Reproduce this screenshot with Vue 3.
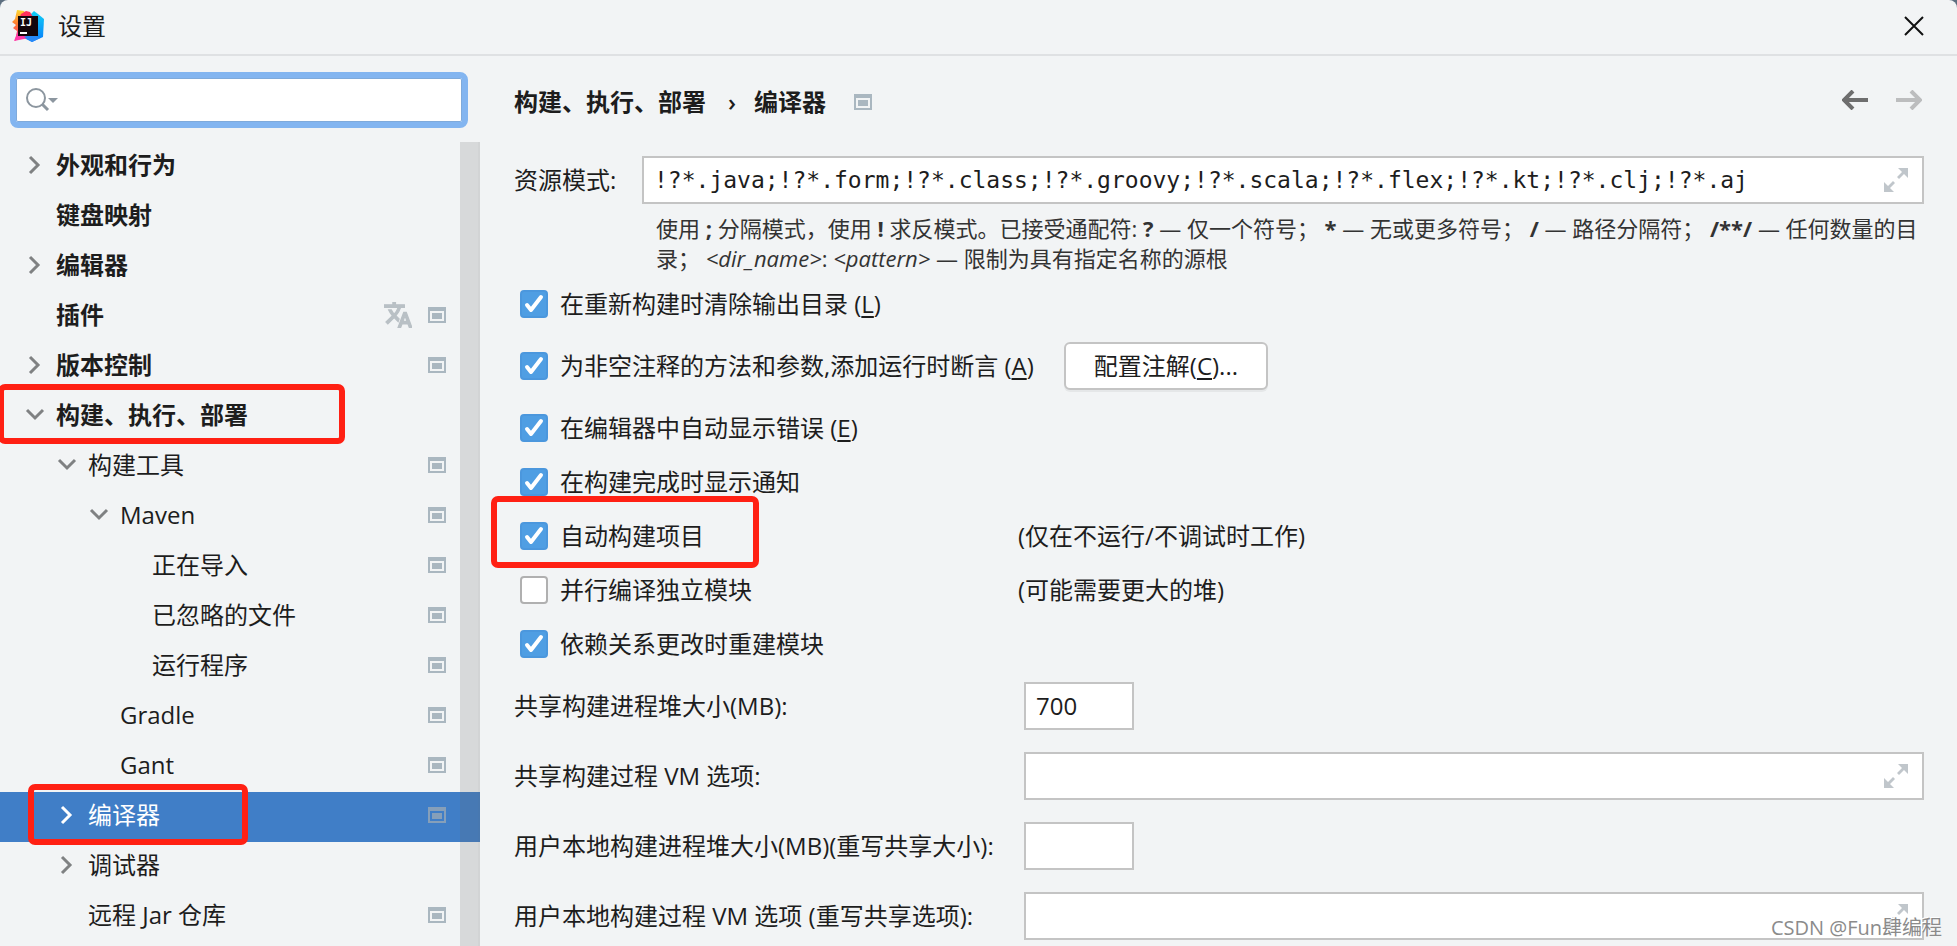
<template>
  <div class="dialog">
    <header class="titlebar">
      <svg class="logo" viewBox="0 0 32 32" aria-hidden="true">
        <defs>
          <linearGradient id="lg-warm" x1="0" y1="0" x2="0" y2="1">
            <stop offset="0" stop-color="#fdd835" />
            <stop offset="0.45" stop-color="#ff7a2f" />
            <stop offset="1" stop-color="#ff2d90" />
          </linearGradient>
          <linearGradient id="lg-cool" x1="0" y1="0" x2="0" y2="1">
            <stop offset="0" stop-color="#10d0f5" />
            <stop offset="1" stop-color="#087cfa" />
          </linearGradient>
        </defs>
        <path d="M18 5l4-4 4 3 6 5-1 18-11 5-8-4z" fill="url(#lg-cool)" />
        <path d="M5 0l7 1 4 6-7 20-6 4 2-10-4-3 3-3-4-3 3-3z" fill="url(#lg-warm)" />
        <path d="M9 4l5-3 4 1 3 5H8z" fill="#fe315d" />
        <path d="M2 31l4-10 12 7-6 1z" fill="#ff3aa8" />
        <path d="M12 27l8 5 8-4-8-4z" fill="#2789f8" />
        <rect x="6" y="6" width="20" height="20" fill="#12060b" />
        <text x="8" y="16" class="logo-text">IJ</text>
        <rect x="8" y="22" width="7" height="2" fill="#fff" />
      </svg>
      <h1>设置</h1>
      <button class="icon-btn close" type="button" aria-label="关闭">
        <svg width="20" height="20" viewBox="0 0 20 20">
          <path d="M1 1l18 18M19 1L1 19" stroke="#111" stroke-width="2" fill="none" />
        </svg>
      </button>
    </header>

    <div class="body">
      <aside class="sidebar">
        <label class="search">
          <svg width="34" height="26" viewBox="0 0 34 26" aria-hidden="true">
            <circle cx="12" cy="11" r="9" fill="none" stroke="#8c969f" stroke-width="2" />
            <path d="M18 17l6 6" stroke="#8c969f" stroke-width="3" />
            <path d="M24 11h10l-5 5z" fill="#8c969f" />
          </svg>
          <input v-model="query" type="text" aria-label="搜索设置" />
        </label>

        <div class="tree-wrap">
          <ul class="tree">
            <li v-for="item in tree" :key="item.label">
              <button
                type="button"
                class="node"
                :class="[`level-${item.level}`, { selected: item.label === current }]"
                @click="current = item.label"
              >
                <span class="arrow">
                  <svg v-if="item.state === 'closed'" width="12" height="18" viewBox="0 0 12 18">
                    <path d="M1 1l8 8-8 8" />
                  </svg>
                  <svg v-else-if="item.state === 'open'" width="18" height="12" viewBox="0 0 18 12">
                    <path d="M1 1l8 8 8-8" />
                  </svg>
                </span>
                <span class="name">{{ item.label }}</span>
                <svg v-if="item.translate" class="lang" width="28" height="26" viewBox="1 2 22 20">
                  <path
                    d="M12.87 15.07l-2.54-2.51.03-.03c1.74-1.94 2.98-4.17 3.71-6.53H17V4h-7V2H8v2H1v1.99h11.17C11.5 7.92 10.44 9.75 9 11.35 8.07 10.32 7.3 9.19 6.69 8h-2c.73 1.63 1.73 3.17 2.98 4.56l-5.09 5.02L4 19l5-5 3.11 3.11.76-2.04zM18.5 10h-2L12 22h2l1.12-3h4.75L21 22h2l-4.5-12zm-2.62 7l1.62-4.33L19.12 17h-3.24z"
                  />
                </svg>
                <svg v-if="item.project" class="project" width="18" height="16" viewBox="0 0 18 16">
                  <path fill-rule="evenodd" d="M0 0h18v16H0zM2 4v10h14V4zM4 6h10v6H4z" />
                </svg>
              </button>
              <span v-if="item.mark" class="mark" :class="item.mark" />
            </li>
          </ul>
          <div class="scrollbar" />
        </div>
      </aside>

      <main class="content">
        <div class="crumbs">
          <h2>构建、执行、部署</h2>
          <span class="sep">›</span>
          <h2>编译器</h2>
          <svg class="project" width="18" height="16" viewBox="0 0 18 16">
            <path fill-rule="evenodd" d="M0 0h18v16H0zM2 4v10h14V4zM4 6h10v6H4z" />
          </svg>
          <nav class="history">
            <button class="icon-btn" type="button" aria-label="后退">
              <svg width="26" height="20" viewBox="0 0 26 20">
                <path d="M26 10H3M11 1l-9 9 9 9" stroke="#6e6e6e" stroke-width="4" fill="none" />
              </svg>
            </button>
            <button class="icon-btn" type="button" aria-label="前进" disabled>
              <svg width="26" height="20" viewBox="0 0 26 20">
                <path d="M0 10h23M15 1l9 9-9 9" stroke="#bcbdbe" stroke-width="4" fill="none" />
              </svg>
            </button>
          </nav>
        </div>

        <div class="pattern-row">
          <label for="patterns">资源模式:</label>
          <div class="field">
            <input id="patterns" v-model="patterns" class="mono" type="text" />
            <button class="icon-btn" type="button" aria-label="展开">
              <svg width="24" height="24" viewBox="0 0 24 24">
                <path d="M14 0h10v10l-4-4-5 5-2-2 5-5zM0 24V14l4 4 5-5 2 2-5 5 4 4z" fill="#c0c6cb" />
              </svg>
            </button>
          </div>
        </div>
        <p class="hint">
          使用 <b>;</b> 分隔模式，使用 <b>!</b> 求反模式。已接受通配符: <b>?</b> — 仅一个符号； <b>*</b> —
          无或更多符号； <b>/</b> — 路径分隔符； <b>/**/</b> — 任何数量的目录； <i>&lt;dir_name&gt;</i>:
          <i>&lt;pattern&gt;</i> — 限制为具有指定名称的源根
        </p>

        <div class="options">
          <div v-for="opt in options" :key="opt.id" class="option" :class="{ tall: opt.tall }">
            <div class="option-main">
              <span class="check">
                <input :id="opt.id" v-model="opt.checked" type="checkbox" />
                <svg v-if="opt.checked" width="28" height="28" viewBox="0 0 28 28">
                  <path d="M7 15l4 5L21 7" />
                </svg>
              </span>
              <label :for="opt.id"
                >{{ opt.label }}<template v-if="opt.key"> (<u>{{ opt.key }}</u>)</template></label
              >
              <button v-if="opt.action" class="push" type="button">配置注解(<u>C</u>)...</button>
            </div>
            <span v-if="opt.note" class="note">{{ opt.note }}</span>
            <span v-if="opt.mark" class="mark auto" />
          </div>
        </div>

        <div class="form">
          <div v-for="f in fields" :key="f.id" class="form-row">
            <label :for="f.id">{{ f.label }}</label>
            <div class="field" :class="{ small: !f.wide }">
              <input :id="f.id" v-model="f.value" type="text" />
              <button v-if="f.wide" class="icon-btn" type="button" aria-label="展开">
                <svg width="24" height="24" viewBox="0 0 24 24">
                  <path d="M14 0h10v10l-4-4-5 5-2-2 5-5zM0 24V14l4 4 5-5 2 2-5 5 4 4z" fill="#c0c6cb" />
                </svg>
              </button>
            </div>
          </div>
        </div>
      </main>
    </div>

    <div class="watermark">CSDN @Fun肆编程</div>
  </div>
</template>

<script setup>
import { ref } from "vue";

const query = ref("");
const current = ref("编译器");
const patterns = ref(
  "!?*.java;!?*.form;!?*.class;!?*.groovy;!?*.scala;!?*.flex;!?*.kt;!?*.clj;!?*.aj"
);

const tree = [
  { label: "外观和行为", level: 0, state: "closed" },
  { label: "键盘映射", level: 0 },
  { label: "编辑器", level: 0, state: "closed" },
  { label: "插件", level: 0, project: true, translate: true },
  { label: "版本控制", level: 0, state: "closed", project: true },
  { label: "构建、执行、部署", level: 0, state: "open", mark: "build" },
  { label: "构建工具", level: 1, state: "open", project: true },
  { label: "Maven", level: 2, state: "open", project: true },
  { label: "正在导入", level: 3, project: true },
  { label: "已忽略的文件", level: 3, project: true },
  { label: "运行程序", level: 3, project: true },
  { label: "Gradle", level: 2, project: true },
  { label: "Gant", level: 2, project: true },
  { label: "编译器", level: 1, state: "closed", project: true, mark: "compiler" },
  { label: "调试器", level: 1, state: "closed" },
  { label: "远程 Jar 仓库", level: 1, project: true },
];

const options = ref([
  { id: "clear", label: "在重新构建时清除输出目录", key: "L", checked: true, tall: true },
  {
    id: "assert",
    label: "为非空注释的方法和参数,添加运行时断言",
    key: "A",
    checked: true,
    tall: true,
    action: true,
  },
  { id: "errors", label: "在编辑器中自动显示错误", key: "E", checked: true },
  { id: "notify", label: "在构建完成时显示通知", checked: true },
  { id: "auto", label: "自动构建项目", checked: true, note: "(仅在不运行/不调试时工作)", mark: true },
  { id: "parallel", label: "并行编译独立模块", checked: false, note: "(可能需要更大的堆)" },
  { id: "deps", label: "依赖关系更改时重建模块", checked: true },
]);

const fields = ref([
  { id: "heap", label: "共享构建进程堆大小(MB):", value: "700" },
  { id: "vm", label: "共享构建过程 VM 选项:", value: "", wide: true },
  { id: "user-heap", label: "用户本地构建进程堆大小(MB)(重写共享大小):", value: "" },
  { id: "user-vm", label: "用户本地构建过程 VM 选项 (重写共享选项):", value: "", wide: true },
]);
</script>

<style>
body {
  background: #5d6f80;
}
</style>

<style scoped>
* {
  box-sizing: border-box;
}
.dialog {
  position: relative;
  display: flex;
  flex-direction: column;
  min-height: 100vh;
  overflow: hidden;
  border-radius: 8px 8px 0 0;
  background: #f2f4f5;
  color: #1d1d1d;
  font-family: "Open Sans", "Noto Sans CJK SC", sans-serif;
  font-size: 24px;
  line-height: 36px;
}
button,
input {
  font: inherit;
  color: inherit;
}
h1,
h2 {
  margin: 0;
  font-size: 24px;
  line-height: 36px;
}
.icon-btn {
  display: flex;
  padding: 0;
  border: 0;
  background: none;
}

/* title bar */
.titlebar {
  display: flex;
  align-items: center;
  height: 56px;
  padding: 0 33px 2px 12px;
  border-bottom: 2px solid #dfe1e3;
}
.logo {
  width: 32px;
  height: 32px;
}
.logo-text {
  fill: #fff;
  font: bold 10px "DejaVu Sans Mono", monospace;
}
.titlebar h1 {
  margin-left: 14px;
  font-weight: 400;
}
.close {
  margin-left: auto;
}

.body {
  display: flex;
  flex: 1;
}

/* sidebar */
.sidebar {
  display: flex;
  flex-direction: column;
  flex: 0 0 480px;
  padding-top: 16px;
}
.search {
  display: flex;
  align-items: center;
  height: 56px;
  margin: 0 12px 14px 10px;
  padding: 0 8px;
  border: 6px solid #83b5f0;
  border-radius: 8px;
  background: #fff;
  box-shadow: inset 0 0 0 1px #7faadb;
}
.search input {
  flex: 1;
  min-width: 0;
  border: 0;
  outline: 0;
  background: none;
}
.tree-wrap {
  position: relative;
  flex: 1;
}
.tree {
  margin: 0;
  padding: 0;
  list-style: none;
}
.tree li {
  position: relative;
}
.node {
  display: flex;
  align-items: center;
  width: 100%;
  height: 50px;
  padding: 0 34px 4px 20px;
  border: 0;
  background: none;
  text-align: left;
}
.level-0 {
  font-weight: 700;
}
.level-1 {
  padding-left: 52px;
}
.level-2 {
  padding-left: 84px;
}
.level-3 {
  padding-left: 116px;
}
.arrow {
  display: flex;
  justify-content: center;
  width: 30px;
  margin-right: 6px;
}
.arrow svg {
  overflow: visible;
}
.arrow path {
  fill: none;
  stroke: #7f8182;
  stroke-width: 3;
}
.name {
  flex: 1;
}
.lang {
  margin-right: 16px;
  fill: #b9c0c5;
  stroke: #b9c0c5;
  stroke-width: 1;
}
.project {
  fill: #aab7c0;
}
.selected {
  background: #407ec7;
  color: #fff;
}
.selected .arrow path {
  stroke: #fff;
}
.selected .project {
  fill: #869fb9;
}
.scrollbar {
  position: absolute;
  top: 0;
  right: 0;
  bottom: 0;
  width: 20px;
  border-right: 2px solid rgba(100, 100, 100, 0.04);
  background: rgba(100, 100, 100, 0.19);
}

/* red call-outs */
.mark {
  position: absolute;
  border: 6px solid #ff2013;
  border-radius: 7px;
  pointer-events: none;
}
.build {
  top: -8px;
  left: -2px;
  width: 347px;
  height: 60px;
}
.compiler {
  top: -8px;
  left: 28px;
  width: 220px;
  height: 61px;
}
.auto {
  top: -13px;
  left: -23px;
  width: 268px;
  height: 72px;
}

/* settings page */
.content {
  flex: 1;
  min-width: 0;
  padding: 26px 33px 6px 34px;
}
.crumbs {
  display: flex;
  align-items: center;
  height: 40px;
}
.sep {
  width: 48px;
  padding-left: 4px;
  font-weight: 600;
  text-align: center;
}
.crumbs .project {
  margin-left: 28px;
}
.history {
  display: flex;
  gap: 28px;
  margin-left: auto;
  padding: 0 2px 4px 0;
}
.pattern-row {
  display: grid;
  grid-template-columns: 128px 1fr;
  align-items: center;
  margin-top: 34px;
}
.field {
  display: flex;
  align-items: center;
  height: 48px;
  padding: 0 14px 0 10px;
  border: 2px solid #c4c4c4;
  background: #fff;
}
.field input {
  flex: 1;
  min-width: 0;
  padding: 0;
  border: 0;
  outline: 0;
  background: none;
}
.field .mono {
  font-family: "DejaVu Sans Mono", "Liberation Mono", monospace;
  font-size: 23px;
}
.hint {
  margin: 9px -5px 0 142px;
  color: #333;
  font-size: 22px;
  line-height: 30px;
}

.options {
  display: grid;
}
.option {
  position: relative;
  display: grid;
  grid-template-columns: 504px 1fr;
  align-items: center;
  height: 54px;
}
.option.tall {
  height: 62px;
}
.option:nth-child(2) {
  margin-bottom: 4px;
}
.option-main {
  display: flex;
  align-items: center;
  padding-left: 6px;
  white-space: nowrap;
}
.check {
  display: grid;
  margin-right: 12px;
}
.check > * {
  grid-area: 1 / 1;
}
.check input {
  width: 28px;
  height: 28px;
  margin: 0;
  appearance: none;
  border: 2px solid #b0b0b0;
  border-radius: 4px;
  background: #fff;
}
.check input:checked {
  border-color: #4b97dd;
  background: #4f9ee3;
}
.check svg {
  pointer-events: none;
}
.check path {
  fill: none;
  stroke: #fff;
  stroke-width: 4;
  stroke-linecap: round;
  stroke-linejoin: round;
}
.push {
  height: 48px;
  margin-left: 30px;
  padding: 0 28px;
  border: 2px solid #c4c4c4;
  border-radius: 6px;
  background: #fff;
  box-shadow: 0 2px 0 rgba(0, 0, 0, 0.05);
}
u {
  text-underline-offset: 3px;
  text-decoration-thickness: 2px;
}

.form {
  display: grid;
  gap: 22px;
  margin-top: 11px;
}
.form-row {
  display: grid;
  grid-template-columns: 510px 1fr;
  align-items: center;
}
.small {
  width: 110px;
}

.watermark {
  position: absolute;
  right: 15px;
  bottom: 4px;
  color: #8b8b8b;
  font-size: 20px;
  line-height: 28px;
  text-shadow: -1px -1px 0 #fff;
}
</style>
